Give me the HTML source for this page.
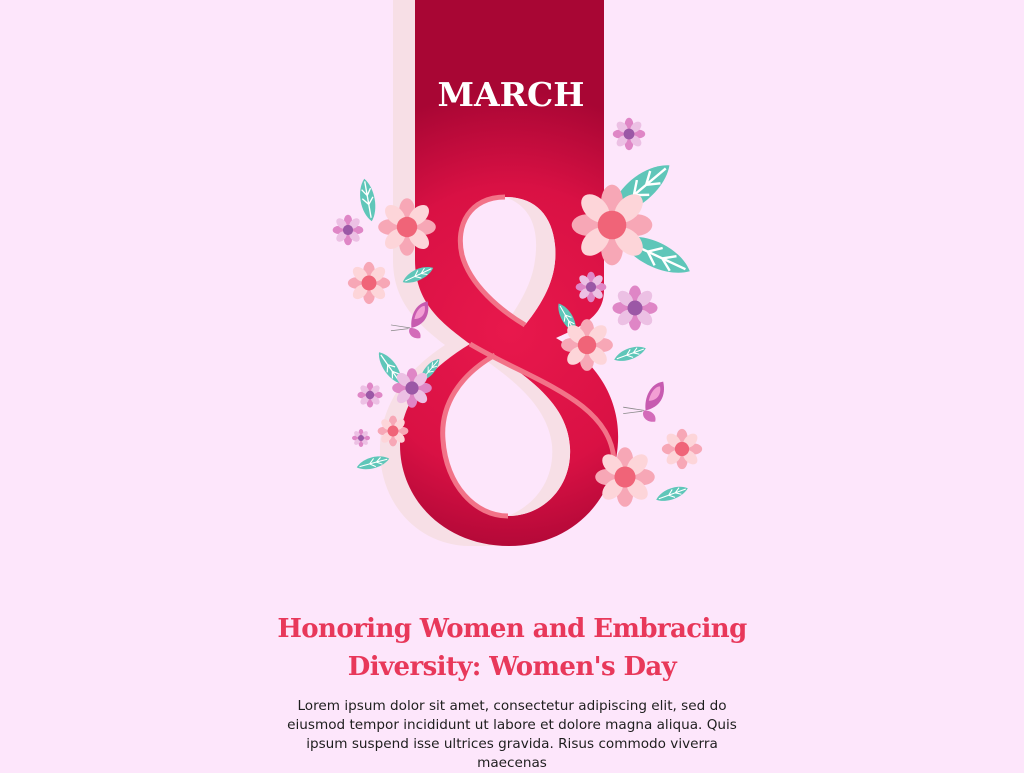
<!DOCTYPE html>
<html><head><meta charset="utf-8">
<style>
html,body{margin:0;padding:0;background:#fde6fb;width:1024px;height:768px;overflow:hidden}
svg{position:absolute;left:0;top:0}
.t{position:absolute;left:212px;width:600px;text-align:center;font-family:"DejaVu Serif","Liberation Serif",serif;font-weight:bold;color:#e8385a;font-size:26px;line-height:38px;top:610px;letter-spacing:-0.6px;white-space:nowrap}
.b{position:absolute;left:212px;width:600px;text-align:center;font-family:"DejaVu Sans","Liberation Sans",sans-serif;font-size:13.6px;line-height:19px;color:#1e1e1e;top:697px;white-space:nowrap}
</style></head><body>
<svg width="1024" height="768" viewBox="0 0 1024 768">
<defs>
<radialGradient id="rg" cx="510" cy="330" r="240" gradientUnits="userSpaceOnUse">
<stop offset="0" stop-color="#e8184c"/><stop offset="0.6" stop-color="#d91144"/><stop offset="1" stop-color="#a80634"/></radialGradient>
<symbol id="fp" viewBox="-50 -50 100 100">
<g fill="#f7a7b6"><ellipse cx="0" cy="-28" rx="13" ry="20"/><ellipse cx="0" cy="-28" rx="13" ry="20" transform="rotate(90)"/><ellipse cx="0" cy="-28" rx="13" ry="20" transform="rotate(180)"/><ellipse cx="0" cy="-28" rx="13" ry="20" transform="rotate(270)"/></g>
<g fill="#fdd5d9"><ellipse cx="0" cy="-28" rx="13" ry="20" transform="rotate(45)"/><ellipse cx="0" cy="-28" rx="13" ry="20" transform="rotate(135)"/><ellipse cx="0" cy="-28" rx="13" ry="20" transform="rotate(225)"/><ellipse cx="0" cy="-28" rx="13" ry="20" transform="rotate(315)"/></g>
<circle r="17" fill="#f06478"/></symbol>
<symbol id="fu" viewBox="-50 -50 100 100">
<g fill="#df86c6"><ellipse cx="0" cy="-27" rx="12" ry="18"/><ellipse cx="0" cy="-27" rx="12" ry="18" transform="rotate(90)"/><ellipse cx="0" cy="-27" rx="12" ry="18" transform="rotate(180)"/><ellipse cx="0" cy="-27" rx="12" ry="18" transform="rotate(270)"/></g>
<g fill="#ecc0e4"><ellipse cx="0" cy="-27" rx="12" ry="18" transform="rotate(45)"/><ellipse cx="0" cy="-27" rx="12" ry="18" transform="rotate(135)"/><ellipse cx="0" cy="-27" rx="12" ry="18" transform="rotate(225)"/><ellipse cx="0" cy="-27" rx="12" ry="18" transform="rotate(315)"/></g>
<circle r="15" fill="#9b58a6"/></symbol>
<symbol id="lf" viewBox="-50 -20 100 40">
<path d="M-48,0 C-25,-22 25,-22 48,0 C25,20 -25,20 -48,0Z" fill="#5fc6b9"/>
<path d="M-40,0 L42,0 M-10,0 L5,-12 M10,0 L25,-10 M-10,0 L5,12 M10,0 L25,10" stroke="#fff" stroke-width="3" fill="none"/></symbol>
<symbol id="bf" viewBox="-30 -30 60 60">
<path d="M2,8 C0,-8 8,-26 24,-28 C28,-10 20,4 2,8Z" fill="#c75bb0"/>
<path d="M6,-4 C8,-14 14,-22 20,-22 C22,-12 16,-4 6,-4Z" fill="#f39fd4"/>
<path d="M0,8 C-4,14 2,24 14,22 C16,14 10,8 0,8Z" fill="#d36bb9"/>
<path d="M0,8 L-26,4 M-2,9 L-26,12" stroke="#888" stroke-width="1"/></symbol>
</defs>
<path d="M393,0 L415,0 L415,260 C415,300 440,320 470,342 L470,345 C430,368 400,400 400,445 C400,500 445,546 509,546 L470,546 C420,546 378,505 380,445 C382,400 410,368 445,345 C415,322 393,300 393,260Z" fill="#f7dfe6"/>
<path fill-rule="evenodd" fill="url(#rg)" d="M415,0 L604,0 L604,290 C604,315 585,325 556,338 C598,362 620,400 618,442 C615,502 570,546 509,546 C445,546 400,500 400,445 C400,400 430,368 470,344 C440,322 415,302 415,260 Z
M505,197 C470,197 455,225 462,255 C470,285 500,310 525,325 C545,300 558,275 555,245 C552,215 535,197 505,197Z
M495,355 C460,375 440,405 443,440 C446,485 475,516 508,516 C545,516 572,485 570,448 C568,410 540,385 495,355Z"/>
<path d="M555,245 C552,215 535,197 505,197 C528,205 540,225 535,260 C532,285 518,305 510,318 L525,325 C545,300 558,275 555,245Z" fill="#f7dfe6"/>
<path d="M495,355 C540,385 568,410 570,448 C572,485 545,516 508,516 C535,505 555,480 552,445 C548,410 520,385 488,362Z" fill="#f7dfe6"/>
<path d="M505,197 C470,197 455,225 462,255 C470,285 500,310 525,325 M470,344 C530,380 610,400 614,460 M495,355 C460,375 440,405 443,440 C446,485 475,516 508,516" stroke="#f27388" stroke-width="5" fill="none"/>
<text x="511" y="106" text-anchor="middle" font-family="DejaVu Serif,serif" font-weight="bold" font-size="33" fill="#fff">MARCH</text>
<use href="#lf" width="46" height="18" transform="translate(368,200) rotate(-100) translate(-23,-9)"/>
<use href="#lf" width="80" height="32" transform="translate(640,190) rotate(-40) translate(-40,-16)"/>
<use href="#lf" width="80" height="32" transform="translate(655,255) rotate(25) translate(-40,-16)"/>
<use href="#lf" width="36" height="14" transform="translate(418,275) rotate(-25) translate(-18,-7)"/>
<use href="#lf" width="36" height="14" transform="translate(567,318) rotate(60) translate(-18,-7)"/>
<use href="#lf" width="36" height="14" transform="translate(630,354) rotate(-20) translate(-18,-7)"/>
<use href="#lf" width="42" height="16" transform="translate(390,368) rotate(55) translate(-21,-8)"/>
<use href="#lf" width="30" height="12" transform="translate(430,370) rotate(-50) translate(-15,-6)"/>
<use href="#lf" width="36" height="14" transform="translate(373,463) rotate(-15) translate(-18,-7)"/>
<use href="#lf" width="36" height="14" transform="translate(672,494) rotate(-20) translate(-18,-7)"/>
<use href="#fp" x="377" y="197" width="60" height="60"/>
<use href="#fp" x="570" y="183" width="84" height="84"/>
<use href="#fp" x="560" y="318" width="54" height="54"/>
<use href="#fp" x="594" y="446" width="62" height="62"/>
<use href="#fp" x="347" y="261" width="44" height="44"/>
<use href="#fp" x="661" y="428" width="42" height="42"/>
<use href="#fp" x="377" y="415" width="32" height="32"/>
<use href="#fu" x="611" y="116" width="36" height="36"/>
<use href="#fu" x="331" y="213" width="34" height="34"/>
<use href="#fu" x="574" y="270" width="34" height="34"/>
<use href="#fu" x="610" y="283" width="50" height="50"/>
<use href="#fu" x="390" y="366" width="44" height="44"/>
<use href="#fu" x="356" y="381" width="28" height="28"/>
<use href="#fu" x="351" y="428" width="20" height="20"/>
<use href="#bf" x="388" y="300" width="44" height="44"/>
<use href="#bf" x="620" y="380" width="48" height="48"/>
</svg>
<div class="t">Honoring Women and Embracing<br>Diversity: Women's Day</div>
<div class="b">Lorem ipsum dolor sit amet, consectetur adipiscing elit, sed do<br>eiusmod tempor incididunt ut labore et dolore magna aliqua. Quis<br>ipsum suspend isse ultrices gravida. Risus commodo viverra<br>maecenas</div>
</body></html>
